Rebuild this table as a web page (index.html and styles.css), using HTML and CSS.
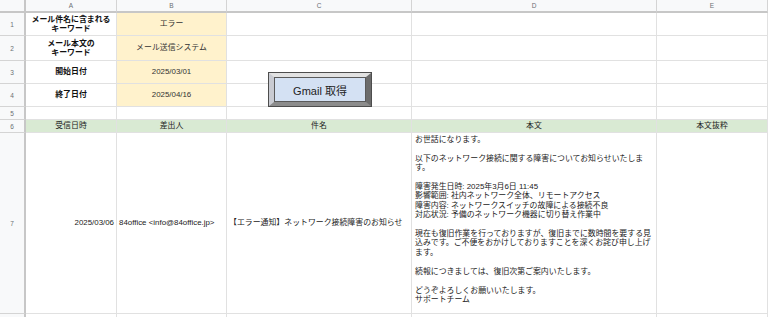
FILE: index.html
```html
<!DOCTYPE html>
<html lang="ja">
<head>
<meta charset="utf-8">
<title>Gmail 取得</title>
<link rel="stylesheet" href="styles.css">
</head>
<body>
<div class="sheet">
  <div class="grid">
    <div class="corner"></div>
    <div class="colh">A</div>
    <div class="colh">B</div>
    <div class="colh">C</div>
    <div class="colh">D</div>
    <div class="colh">E</div>

    <div class="rowh">1</div>
    <div class="c label">メール件名に含まれる<br>キーワード</div>
    <div class="c val">エラー</div>
    <div class="c"></div><div class="c"></div><div class="c"></div>

    <div class="rowh">2</div>
    <div class="c label">メール本文の<br>キーワード</div>
    <div class="c val">メール送信システム</div>
    <div class="c"></div><div class="c"></div><div class="c"></div>

    <div class="rowh">3</div>
    <div class="c label">開始日付</div>
    <div class="c val">2025/03/01</div>
    <div class="c"></div><div class="c"></div><div class="c"></div>

    <div class="rowh">4</div>
    <div class="c label">終了日付</div>
    <div class="c val">2025/04/16</div>
    <div class="c"></div><div class="c"></div><div class="c"></div>

    <div class="rowh">5</div>
    <div class="c"></div><div class="c"></div><div class="c"></div><div class="c"></div><div class="c"></div>

    <div class="rowh">6</div>
    <div class="c head">受信日時</div>
    <div class="c head">差出人</div>
    <div class="c head">件名</div>
    <div class="c head">本文</div>
    <div class="c head">本文抜粋</div>

    <div class="rowh">7</div>
    <div class="c right">2025/03/06</div>
    <div class="c left">84office &lt;info@84office.jp&gt;</div>
    <div class="c left">【エラー通知】ネットワーク接続障害のお知らせ</div>
    <div class="c body">お世話になります。<br><br>以下のネットワーク接続に関する障害についてお知らせいたしま<br>す。<br><br>障害発生日時: 2025年3月6日 11:45<br>影響範囲: 社内ネットワーク全体、リモートアクセス<br>障害内容: ネットワークスイッチの故障による接続不良<br>対応状況: 予備のネットワーク機器に切り替え作業中<br><br>現在も復旧作業を行っておりますが、復旧までに数時間を要する見<br>込みです。ご不便をおかけしておりますことを深くお詫び申し上げ<br>ます。<br><br>続報につきましては、復旧次第ご案内いたします。<br><br>どうぞよろしくお願いいたします。<br>サポートチーム</div>
    <div class="c"></div>

    <div class="rowh"></div>
    <div class="c"></div><div class="c"></div><div class="c"></div><div class="c"></div><div class="c"></div>
  </div>
  <button class="gmail-btn"><span class="face">Gmail 取得</span></button>
</div>
</body>
</html>
```

FILE: styles.css
```css
html, body {
  margin: 0;
  padding: 0;
  background: #ffffff;
}
body {
  width: 768px;
  height: 317px;
  overflow: hidden;
  font-family: "Liberation Sans", "Noto Sans CJK JP", sans-serif;
  color: #222222;
}
.sheet {
  position: relative;
  width: 768px;
  height: 317px;
  overflow: hidden;
}
.grid {
  display: grid;
  grid-template-columns: 26px 91px 110px 185px 245px 111px;
  grid-template-rows: 13px 23px 25px 23px 23px 13px 13px 181px 20px;
}
.grid > div {
  box-sizing: border-box;
  border-right: 1px solid #e1e1e1;
  border-bottom: 1px solid #e1e1e1;
  min-width: 0;
  overflow: hidden;
}
.corner {
  background: #f8f9fa;
  border-right: 2px solid #c7c7c7 !important;
  border-bottom: 2px solid #c7c7c7 !important;
}
.colh {
  background: #f8f9fa;
  border-bottom: 2px solid #c7c7c7 !important;
  border-right: 1px solid #d4d4d4 !important;
  color: #6b6f73;
  font-size: 6.5px;
  display: flex;
  align-items: center;
  justify-content: center;
}
.rowh {
  background: #f8f9fa;
  border-right: 2px solid #c7c7c7 !important;
  border-bottom: 1px solid #d4d4d4 !important;
  color: #6b6f73;
  font-size: 6.5px;
  display: flex;
  align-items: center;
  justify-content: center;
}
.c {
  font-size: 7.9px;
  line-height: 9.4px;
  display: flex;
  align-items: center;
  white-space: nowrap;
}
.label {
  font-weight: bold;
  justify-content: center;
  text-align: center;
  color: #111111;
}
.val {
  background: #fff2cc;
  justify-content: center;
  color: #333333;
}
.head {
  background: #d9ead3;
  justify-content: center;
  color: #222222;
}
.right {
  justify-content: flex-end;
  padding-right: 2px;
}
.left {
  justify-content: flex-start;
  padding-left: 2px;
}
.body {
  align-items: flex-start;
  padding: 2px 1px 0 3px;
}
.gmail-btn {
  position: absolute;
  left: 269px;
  top: 73px;
  width: 102px;
  height: 33px;
  box-sizing: border-box;
  margin: 0;
  padding: 0;
  border-style: solid;
  border-width: 4px 5px 4px 5px;
  border-color: #e2e2e2 #6c6c6c #8c8c8c #c9cbd2;
  box-shadow: 0 0 0 1px #4d4d4d;
  background: #d4e1f3;
  display: flex;
  cursor: pointer;
}
.face {
  flex: 1;
  display: flex;
  align-items: center;
  justify-content: center;
  border: 1px solid #5a5a5a;
  background: #d4e1f3;
  font-family: "Liberation Sans", "Noto Sans CJK JP", sans-serif;
  font-size: 11px;
  color: #222222;
}
```
